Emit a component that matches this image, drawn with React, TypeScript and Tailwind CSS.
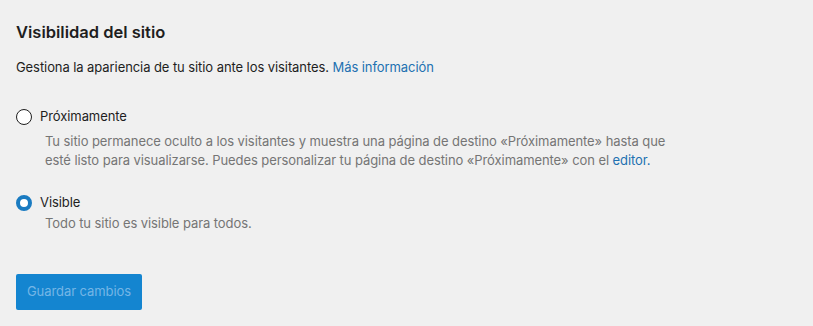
import React from "react";

export default function App() {
  return (
    <div
      className="w-[813px] h-[326px] bg-[#f0f0f0] text-[#1e1e1e] px-4 pt-[20px]"
      style={{ fontFamily: "Inter, 'Noto Sans', sans-serif" }}
    >
      <h2 className="text-[16.5px] leading-[24px] font-semibold">Visibilidad del sitio</h2>
      <p className="mt-[14px] text-[13px] leading-[18px] tracking-[-0.08px]">
        Gestiona la apariencia de tu sitio ante los visitantes.{" "}
        <a className="text-[#2271b1]">Más información</a>
      </p>
      <div className="mt-[31px] flex flex-col tracking-[-0.08px]">
        <div>
          <div className="flex items-center gap-2 h-[20px]">
            <span className="w-4 h-4 rounded-full border-[1.5px] border-[#1e1e1e] bg-white" />
            <span className="text-[13px]">Próximamente</span>
          </div>
          <p className="mt-[5px] ml-[29px] text-[13px] leading-[19px] text-[#757575] max-w-[640px]">
            Tu sitio permanece oculto a los visitantes y muestra una página de destino «Próximamente» hasta que
            esté listo para visualizarse. Puedes personalizar tu página de destino «Próximamente» con el{" "}
            <a className="text-[#2271b1]">editor.</a>
          </p>
        </div>
        <div className="mt-[23px]">
          <div className="flex items-center gap-2 h-[20px]">
            <span className="w-4 h-4 rounded-full border-[4px] border-[#1a7bc1] bg-white" />
            <span className="text-[13px]">Visible</span>
          </div>
          <p className="mt-[1px] ml-[29px] text-[13px] leading-[19px] text-[#757575]">
            Todo tu sitio es visible para todos.
          </p>
        </div>
      </div>
      <button className="mt-[41px] h-[36px] px-[11px] rounded-[2px] bg-[#1485d0] text-[#74b6e6] text-[13px] tracking-[-0.08px]">
        Guardar cambios
      </button>
    </div>
  );
}
